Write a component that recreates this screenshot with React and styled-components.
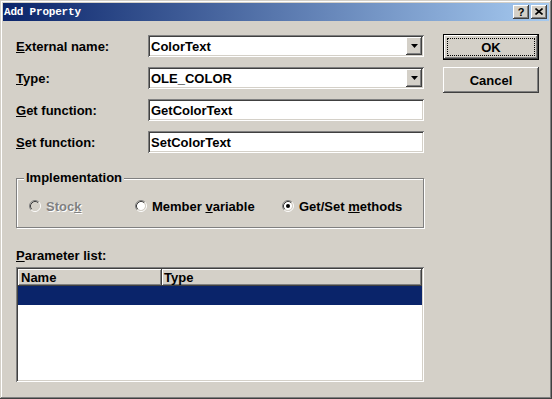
import React from 'react';
import styled, { createGlobalStyle } from 'styled-components';

const GlobalStyle = createGlobalStyle`
  html, body { margin: 0; padding: 0; background: #d4d0c8; }
  body { font-family: "Liberation Sans", Arial, sans-serif; }
`;

const raised = `
  box-shadow: inset -1px -1px 0 #404040, inset 1px 1px 0 #ffffff,
    inset -2px -2px 0 #808080, inset 2px 2px 0 #d4d0c8;
`;
const sunken = `
  box-shadow: inset 1px 1px 0 #808080, inset -1px -1px 0 #ffffff,
    inset 2px 2px 0 #404040, inset -2px -2px 0 #d4d0c8;
`;

const Window = styled.div`
  width: 552px;
  height: 399px;
  box-sizing: border-box;
  padding: 3px;
  background: #d4d0c8;
  box-shadow: inset -1px -1px 0 #404040, inset 1px 1px 0 #d4d0c8,
    inset -2px -2px 0 #808080, inset 2px 2px 0 #ffffff;
  display: flex;
  flex-direction: column;
  font: bold 13px "Liberation Sans", Arial, sans-serif;
  color: #000;
`;

const TitleBar = styled.div`
  height: 18px;
  display: flex;
  align-items: center;
  background: linear-gradient(to right, #0a246a, #a6caf0);
  padding: 0 2px 0 1px;
`;

const TitleText = styled.div`
  flex: 1;
  color: #fff;
  font: bold 11px "Liberation Mono", "DejaVu Sans Mono", monospace;
  letter-spacing: -0.2px;
`;

const TitleButtons = styled.div`
  display: flex;
  gap: 2px;
`;

const TitleButton = styled.div`
  width: 16px;
  height: 14px;
  box-sizing: border-box;
  background: #d4d0c8;
  ${raised}
  display: flex;
  align-items: center;
  justify-content: center;
  font: bold 11px "Liberation Sans", Arial, sans-serif;
  line-height: 14px;
  padding-bottom: 1px;
`;

const Body = styled.div`
  display: flex;
  align-items: flex-start;
  gap: 19px;
  padding: 13px 0 0 13px;
`;

const FormColumn = styled.div`
  width: 408px;
  padding-top: 1px;
  display: flex;
  flex-direction: column;
`;

const FieldGrid = styled.div`
  display: grid;
  grid-template-columns: 132px 276px;
  grid-auto-rows: 22px;
  row-gap: 10px;
  align-items: center;
`;

const Label = styled.label`
  line-height: 15px;
  white-space: nowrap;
`;

const Field = styled.div`
  height: 22px;
  box-sizing: border-box;
  background: #fff;
  ${sunken}
  display: flex;
  align-items: center;
  padding: 0 2px 0 3px;
  line-height: 15px;
`;

const FieldText = styled.span`
  flex: 1;
`;

const ArrowButton = styled.div`
  width: 16px;
  height: 18px;
  box-sizing: border-box;
  background: #d4d0c8;
  ${raised}
  display: flex;
  align-items: center;
  justify-content: center;
`;

const GroupBox = styled.div`
  position: relative;
  margin-top: 25px;
  height: 50px;
  box-sizing: border-box;
  border: 1px solid #808080;
  box-shadow: 1px 1px 0 #ffffff, inset 1px 1px 0 #ffffff;
  padding: 6px 0 0 12px;
  display: grid;
  grid-template-columns: 106px 147px auto;
  align-items: center;
`;

const GroupTitle = styled.span`
  position: absolute;
  top: -9px;
  left: 7px;
  padding: 0 2px;
  background: #d4d0c8;
  line-height: 15px;
`;

const RadioItem = styled.div`
  display: flex;
  align-items: center;
  gap: 5px;
  line-height: 15px;
  color: ${(p) => (p.disabled ? '#808080' : '#000')};
  text-shadow: ${(p) => (p.disabled ? '1px 1px 0 #ffffff' : 'none')};
`;

const ParamLabel = styled.div`
  margin-top: 20px;
  line-height: 15px;
`;

const ListView = styled.div`
  margin-top: 4px;
  height: 115px;
  box-sizing: border-box;
  background: #fff;
  ${sunken}
  padding: 2px;
  display: flex;
  flex-direction: column;
`;

const ListHeader = styled.div`
  display: grid;
  grid-template-columns: 144px 1fr;
  height: 17px;
`;

const HeaderCell = styled.div`
  background: #d4d0c8;
  box-shadow: inset -1px -1px 0 #404040, inset 1px 1px 0 #ffffff,
    inset -2px -2px 0 #808080;
  padding-left: ${(p) => p.pad}px;
  line-height: 17px;
`;

const SelectedRow = styled.div`
  height: 19px;
  background: #0a246a;
`;

const ButtonColumn = styled.div`
  display: flex;
  flex-direction: column;
  gap: 7px;
`;

const DialogButton = styled.div`
  width: 96px;
  height: 26px;
  box-sizing: border-box;
  background: #d4d0c8;
  ${raised}
  border: ${(p) => (p.$default ? '1px solid #000' : 'none')};
  outline: ${(p) => (p.$default ? '1px dotted #000' : 'none')};
  outline-offset: -5px;
  display: flex;
  align-items: center;
  justify-content: center;
  line-height: 15px;
`;

function Radio({ checked, disabled }) {
  const fill = disabled ? '#d4d0c8' : '#ffffff';
  return (
    <svg width="12" height="12" viewBox="0 0 12 12">
      <path d="M2.11 9.89 A5.5 5.5 0 0 1 9.89 2.11" fill="none" stroke="#808080" strokeWidth="1" />
      <path d="M9.89 2.11 A5.5 5.5 0 0 1 2.11 9.89" fill="none" stroke="#ffffff" strokeWidth="1" />
      <circle cx="6" cy="6" r="4" fill={fill} />
      <path d="M2.82 9.18 A4.5 4.5 0 0 1 9.18 2.82" fill="none" stroke="#404040" strokeWidth="1" />
      <path d="M9.18 2.82 A4.5 4.5 0 0 1 2.82 9.18" fill="none" stroke="#d4d0c8" strokeWidth="1" />
      {checked && <circle cx="6" cy="6" r="2" fill={disabled ? '#808080' : '#000'} />}
    </svg>
  );
}

function DropArrow() {
  return (
    <svg width="7" height="4" viewBox="0 0 7 4">
      <polygon points="0,0 7,0 3.5,4" fill="#000" />
    </svg>
  );
}

export default function App() {
  return (
    <>
      <GlobalStyle />
      <Window>
        <TitleBar>
          <TitleText>Add Property</TitleText>
          <TitleButtons>
            <TitleButton>?</TitleButton>
            <TitleButton>
              <svg width="8" height="7" viewBox="0 0 8 7">
                <path d="M0.5 0.5 L7.5 6.5 M7.5 0.5 L0.5 6.5" stroke="#000" strokeWidth="1.6" />
              </svg>
            </TitleButton>
          </TitleButtons>
        </TitleBar>
        <Body>
          <FormColumn>
            <FieldGrid>
              <Label><u>E</u>xternal name:</Label>
              <Field>
                <FieldText>ColorText</FieldText>
                <ArrowButton><DropArrow /></ArrowButton>
              </Field>
              <Label><u>T</u>ype:</Label>
              <Field>
                <FieldText>OLE_COLOR</FieldText>
                <ArrowButton><DropArrow /></ArrowButton>
              </Field>
              <Label><u>G</u>et function:</Label>
              <Field>
                <FieldText>GetColorText</FieldText>
              </Field>
              <Label><u>S</u>et function:</Label>
              <Field>
                <FieldText>SetColorText</FieldText>
              </Field>
            </FieldGrid>
            <GroupBox>
              <GroupTitle>Implementation</GroupTitle>
              <RadioItem disabled>
                <Radio disabled />
                <span>Stoc<u>k</u></span>
              </RadioItem>
              <RadioItem>
                <Radio />
                <span>Member <u>v</u>ariable</span>
              </RadioItem>
              <RadioItem>
                <Radio checked />
                <span>Get/Set <u>m</u>ethods</span>
              </RadioItem>
            </GroupBox>
            <ParamLabel><u>P</u>arameter list:</ParamLabel>
            <ListView>
              <ListHeader>
                <HeaderCell pad={3}>Name</HeaderCell>
                <HeaderCell pad={2}>Type</HeaderCell>
              </ListHeader>
              <SelectedRow />
            </ListView>
          </FormColumn>
          <ButtonColumn>
            <DialogButton $default>OK</DialogButton>
            <DialogButton>Cancel</DialogButton>
          </ButtonColumn>
        </Body>
      </Window>
    </>
  );
}
